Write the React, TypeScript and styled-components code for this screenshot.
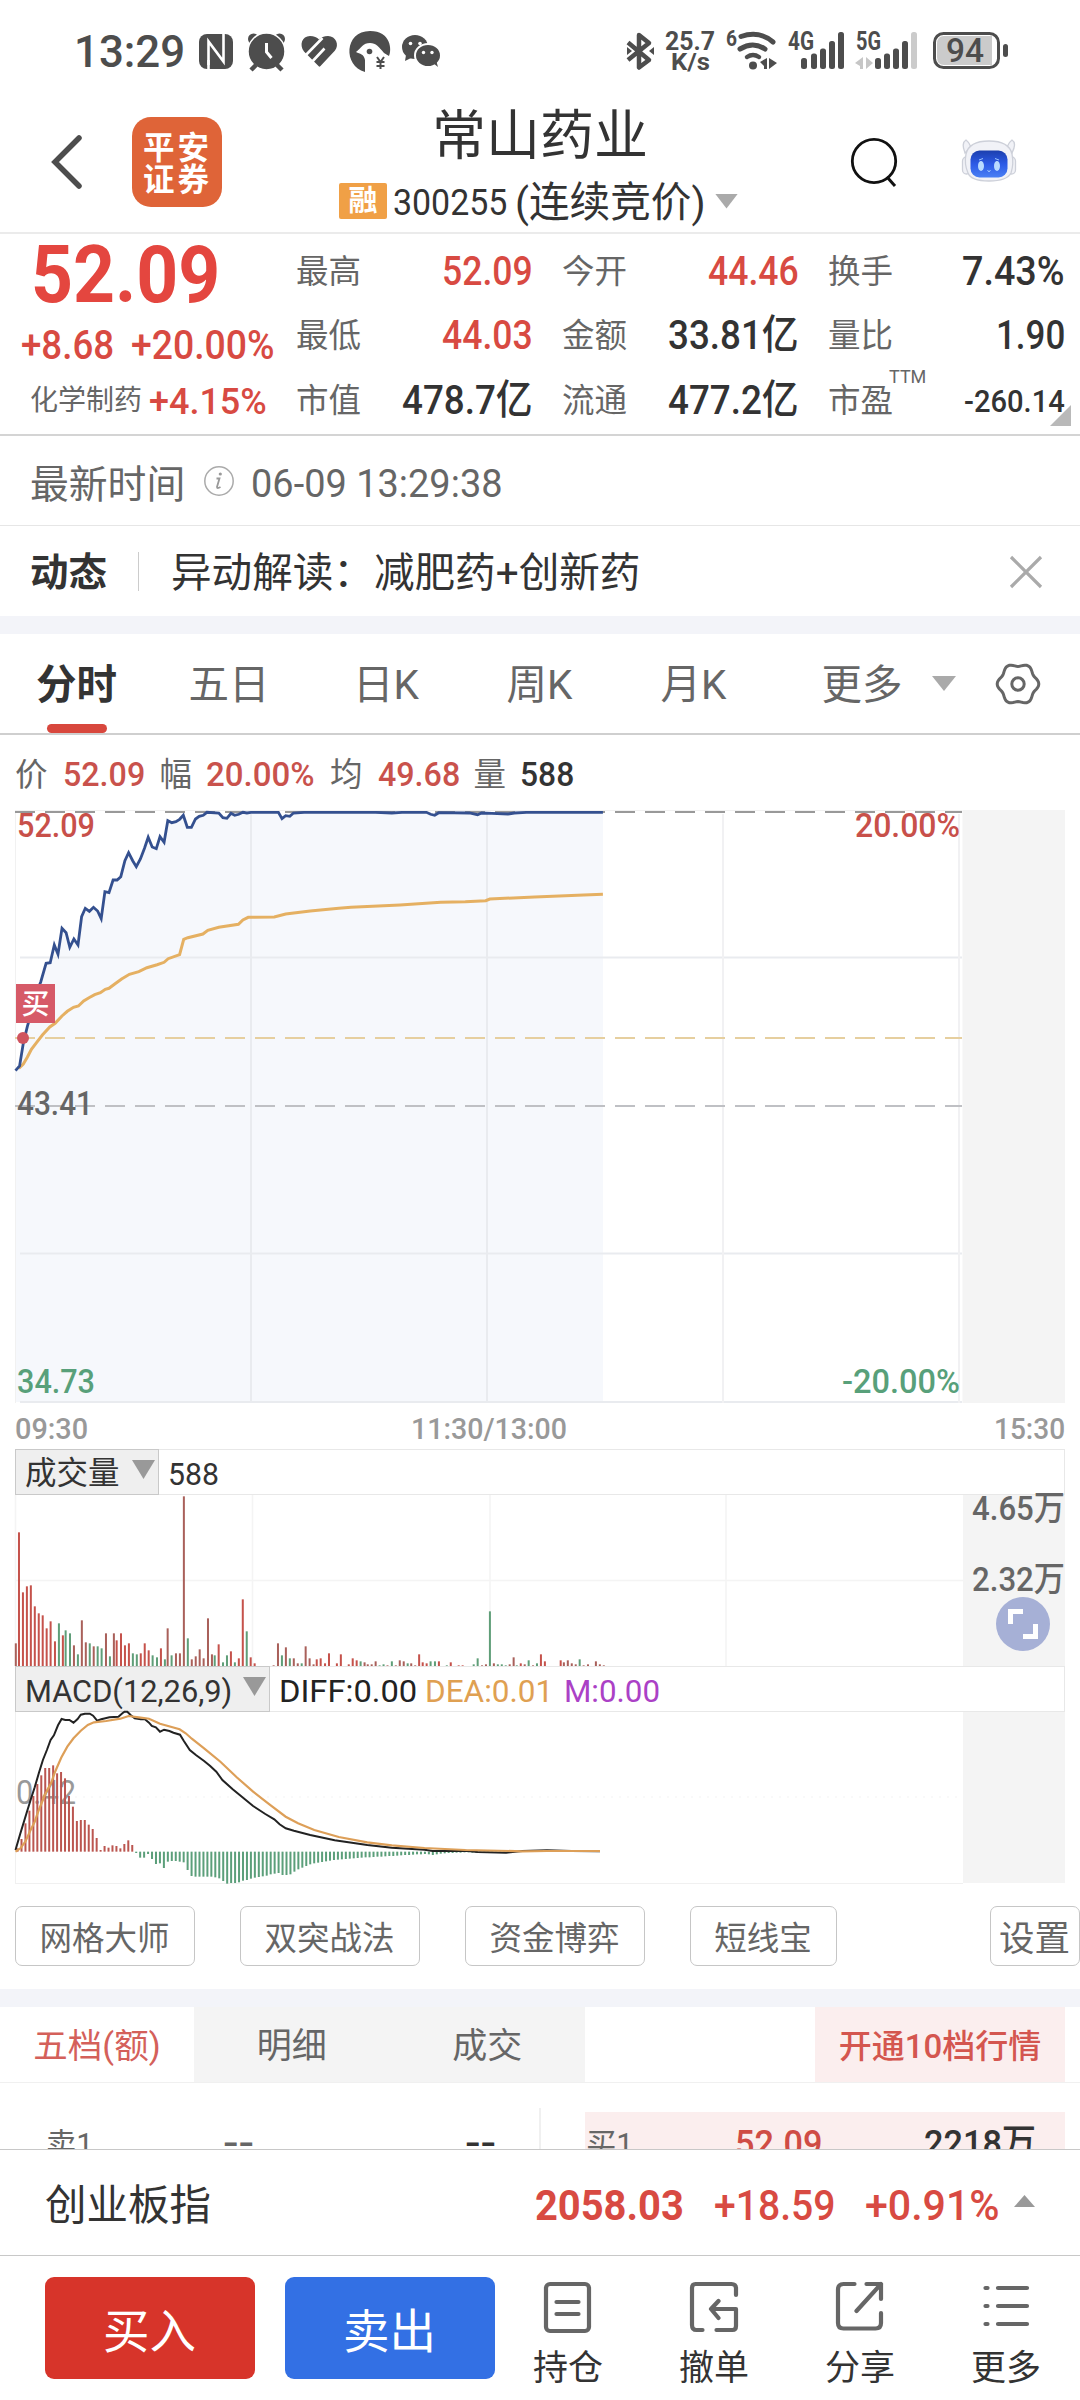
import React, { useLayoutEffect, useRef, useState } from "react";
import styled, { createGlobalStyle } from "styled-components";

const FONT = 'Roboto, "Noto Sans CJK SC", sans-serif';
const RED = "#d84a42";
const INK = "#333";
const GREY = "#666";
const GREEN = "#58a07a";

const GlobalStyle = createGlobalStyle`
  * { box-sizing: border-box; }
  html, body { margin: 0; padding: 0; background: #fff; }
  body { font-family: ${FONT}; color: ${INK}; }
  svg { display: block; flex: none; overflow: visible; }
`;

/* ---------- text helpers ---------- */

const FitBox = styled.span<{ $w: number; $size: number; $color?: string; $weight?: number; $ml?: number }>`
  display: block;
  flex: none;
  width: ${(p) => p.$w}px;
  margin-left: ${(p) => p.$ml ?? 0}px;
  font-size: ${(p) => p.$size}px;
  line-height: ${(p) => Math.round(p.$size * 1.2)}px;
  font-weight: ${(p) => p.$weight ?? 400};
  color: ${(p) => p.$color ?? INK};
  white-space: nowrap;
`;

const FitInner = styled.span`
  display: inline-block;
  vertical-align: top;
  transform-origin: 0 50%;
`;

interface NumProps {
  w: number;
  size: number;
  color?: string;
  weight?: number;
  ml?: number;
  children: React.ReactNode;
}

function Num({ w, size, color, weight, ml, children }: NumProps) {
  const ref = useRef<HTMLSpanElement>(null);
  const [k, setK] = useState(1);
  useLayoutEffect(() => {
    if (ref.current) setK(w / ref.current.offsetWidth);
  }, [w]);
  return (
    <FitBox $w={w} $size={size} $color={color} $weight={weight} $ml={ml}>
      <FitInner ref={ref} style={{ transform: `scaleX(${k})` }}>
        {children}
      </FitInner>
    </FitBox>
  );
}

const Label = styled.span<{ $size: number; $color?: string; $weight?: number; $ml?: number }>`
  flex: none;
  font-size: ${(p) => p.$size}px;
  line-height: ${(p) => Math.round(p.$size * 1.2)}px;
  color: ${(p) => p.$color ?? GREY};
  font-weight: ${(p) => p.$weight ?? 400};
  margin-left: ${(p) => p.$ml ?? 0}px;
  white-space: nowrap;
`;

const Triangle = styled.i<{ $w: number; $h: number; $color?: string; $up?: boolean; $ml?: number; $mt?: number }>`
  flex: none;
  width: ${(p) => p.$w}px;
  height: ${(p) => p.$h}px;
  margin-left: ${(p) => p.$ml ?? 0}px;
  margin-top: ${(p) => p.$mt ?? 0}px;
  background: ${(p) => p.$color ?? "#aaa"};
  clip-path: ${(p) => (p.$up ? "polygon(50% 0, 100% 100%, 0 100%)" : "polygon(0 0, 100% 0, 50% 100%)")};
`;

/* ---------- layout ---------- */

const Screen = styled.div`
  width: 1080px;
  height: 2400px;
  overflow: hidden;
  display: flex;
  flex-direction: column;
  background: #fff;
`;

const StatusBar = styled.div`
  height: 100px;
  flex: none;
  display: flex;
  align-items: center;
  padding: 3px 71px 0 73px;
  justify-content: space-between;
`;
const StatusGroup = styled.div`
  display: flex;
  align-items: center;
  height: 44px;
`;
const StatusIconsWrap = styled.div`
  margin-left: 7px;
`;

const Header = styled.header`
  height: 134px;
  flex: none;
  display: grid;
  grid-template-columns: 326px 1fr 326px;
  border-bottom: 2px solid #ebebeb;
`;
const HeaderLeft = styled.div`
  display: flex;
  align-items: flex-start;
  padding: 17px 0 0 50px;
`;
const BackWrap = styled.div`
  padding-top: 16px;
  width: 82px;
`;
const Logo = styled.div`
  width: 90px;
  height: 90px;
  border-radius: 19px;
  background: #df6438;
  color: #fff;
  font-family: "Noto Sans CJK SC", sans-serif;
  font-weight: 700;
  font-size: 31.5px;
  letter-spacing: 3px;
  line-height: 32px;
  padding: 12px 0 0 11px;
`;
const HeaderMid = styled.div`
  display: flex;
  flex-direction: column;
  align-items: center;
`;
const Title = styled.h1`
  margin: 6px 0 0;
  font-size: 54px;
  line-height: 62px;
  font-weight: 400;
  color: ${INK};
`;
const SubTitle = styled.div`
  display: flex;
  align-items: center;
  height: 40px;
  margin-top: 13px;
  width: 402px;
  & > span:not(:first-child) {
    padding-top: 4px;
  }
`;
const Margin = styled.span`
  width: 48px;
  height: 36px;
  background: #f0a046;
  border-radius: 2px;
  color: #fff;
  font-weight: 700;
  font-size: 29px;
  line-height: 36px;
  text-align: center;
`;
const HeaderRight = styled.div`
  display: flex;
  padding: 36px 0 0 96px;
  gap: 63px;
`;

const Quote = styled.section`
  height: 202px;
  flex: none;
  display: flex;
  position: relative;
  border-bottom: 2px solid #d4d4d4;
`;
const QuoteMain = styled.div`
  width: 297px;
  display: flex;
  flex-direction: column;
`;
const QuoteLine = styled.div<{ $h: number; $pl: number }>`
  display: flex;
  align-items: center;
  height: ${(p) => p.$h}px;
  padding-left: ${(p) => p.$pl}px;
`;
const Stats = styled.div`
  display: grid;
  grid-template-columns: 236px 236px 236px;
  grid-template-rows: 64px 65px 65px;
  column-gap: 30px;
  padding-top: 5px;
`;
const Stat = styled.div`
  display: flex;
  align-items: center;
  justify-content: space-between;
`;
const StatName = styled.span`
  position: relative;
  font-size: 32.5px;
  line-height: 40px;
  padding-top: 1px;
  margin-left: -1px;
  color: ${GREY};
`;
const Ttm = styled.sup`
  position: absolute;
  left: 61px;
  top: -13px;
  font-size: 18px;
  line-height: 20px;
  font-weight: 400;
`;
const Fold = styled.i`
  position: absolute;
  right: 9px;
  bottom: 8px;
  width: 21px;
  height: 21px;
  background: #b9b9b9;
  clip-path: polygon(100% 0, 100% 100%, 0 100%);
`;

const Row = styled.div<{ $h: number; $pl?: number; $line?: string; $pt?: number }>`
  height: ${(p) => p.$h}px;
  flex: none;
  display: flex;
  align-items: center;
  padding-left: ${(p) => p.$pl ?? 0}px;
  padding-top: ${(p) => p.$pt ?? 0}px;
  border-bottom: ${(p) => (p.$line ? `1px solid ${p.$line}` : "0")};
`;
const Divider = styled.i`
  width: 1px;
  height: 39px;
  background: #ccc;
  margin: -3px 0 0 31px;
`;
const Band = styled.div`
  height: 18px;
  flex: none;
  background: #f3f4f9;
`;
const CloseWrap = styled.span`
  margin: -3px 37px 0 auto;
`;
const InfoWrap = styled.span`
  margin-left: 18px;
  margin-top: -6px;
`;
const GearWrap = styled.span`
  margin-left: 39px;
`;

const Tabs = styled.nav`
  height: 101px;
  flex: none;
  display: flex;
  align-items: center;
  border-bottom: 2px solid #cfcfcf;
`;
const Tab = styled.span<{ $w: number; $active?: boolean }>`
  width: ${(p) => p.$w}px;
  height: 99px;
  display: flex;
  flex-direction: column;
  align-items: center;
  font-size: 40.5px;
  line-height: 102px;
  white-space: nowrap;
  color: ${(p) => (p.$active ? INK : GREY)};
  font-weight: ${(p) => (p.$active ? 700 : 400)};
`;
const Underline = styled.i`
  width: 60px;
  height: 9px;
  flex: none;
  margin-top: -12px;
  border-radius: 5px;
  background: #d8473d;
`;

const Panel = styled.div`
  width: 1050px;
  margin: 0 15px;
  flex: none;
`;
const Axis = styled.div`
  height: 46px;
  display: grid;
  grid-template-columns: 396px 1fr 71px;
  align-items: center;
  padding-top: 5px;
`;
const IndicatorBar = styled.div`
  height: 46px;
  border: 1px solid #e8e8e8;
  display: flex;
  align-items: center;
  & > span {
    padding-top: 3px;
  }
`;
const Picker = styled.div<{ $w: number }>`
  width: ${(p) => p.$w}px;
  height: 46px;
  margin: -1px 0 -1px -1px;
  background: #efefef;
  border: 1px solid #c9c9c9;
  display: flex;
  align-items: center;
  justify-content: space-between;
  padding: 0 3px 0 9px;
  & > span {
    padding-top: 3px;
  }
`;

const Tools = styled.div`
  height: 105px;
  flex: none;
  display: flex;
  align-items: flex-start;
  padding: 22px 0 0 15px;
`;
const Tool = styled.button<{ $w: number; $size?: number; $ml?: number }>`
  width: ${(p) => p.$w}px;
  height: 60px;
  flex: none;
  margin: 0 0 0 ${(p) => p.$ml ?? 0}px;
  padding: 0 1px 1px 0;
  border: 1px solid #c6c6c6;
  border-radius: 7px;
  background: #fff;
  font-family: ${FONT};
  font-size: ${(p) => p.$size ?? 32.5}px;
  color: ${GREY};
`;

const BookTabs = styled.div`
  height: 76px;
  flex: none;
  display: flex;
  border-bottom: 1px solid #f0f0f0;
`;
const BookTab = styled.span<{ $active?: boolean; $size: number }>`
  width: ${(p) => (p.$active ? 194 : 195.5)}px;
  height: 75px;
  line-height: ${(p) => (p.$active ? 78 : 80)}px;
  text-align: center;
  font-size: ${(p) => p.$size}px;
  color: ${(p) => (p.$active ? "#d4605a" : GREY)};
  background: ${(p) => (p.$active ? "#fff" : "#f4f4f4")};
`;
const Promo = styled.span`
  width: 250px;
  height: 75px;
  margin-left: 230px;
  line-height: 79px;
  text-align: center;
  font-size: 33px;
  font-weight: 500;
  color: #d4564f;
  background: #fbeeee;
`;
const Book = styled.div`
  height: 66px;
  flex: none;
  display: grid;
  grid-template-columns: 539px 46px 480px;
  overflow: hidden;
`;
const BookSide = styled.div<{ $pink?: boolean; $pl: number }>`
  display: flex;
  align-items: center;
  height: 60px;
  margin-top: 29px;
  padding: 4px 0 0 ${(p) => p.$pl}px;
  background: ${(p) => (p.$pink ? "#fbeeee" : "transparent")};
`;
const BookRule = styled.i`
  margin-top: 25px;
  height: 60px;
  border-left: 2px solid #f0f0f0;
`;

const IndexBar = styled.div`
  height: 107px;
  flex: none;
  display: flex;
  align-items: center;
  border-top: 1px solid #c8c8c8;
  border-bottom: 1px solid #c8c8c8;
  padding: 6px 45px 0 45px;
  background: #fff;
`;
const IndexNums = styled.div`
  margin-left: auto;
  display: flex;
  align-items: center;
`;

const BottomBar = styled.footer`
  flex: 1;
  display: flex;
  padding: 21px 0 0 45px;
`;
const Trade = styled.button<{ $bg: string }>`
  width: 210px;
  height: 102px;
  margin: 0 30px 0 0;
  border: 0;
  border-radius: 9px;
  padding: 0 1px 2px 0;
  background: ${(p) => p.$bg};
  color: #fff;
  font-family: ${FONT};
  font-size: 46.5px;
`;
const Action = styled.div`
  width: 146px;
  display: flex;
  flex-direction: column;
  align-items: center;
  gap: 16px;
  padding-top: 3px;
`;
const Actions = styled.div`
  display: flex;
  margin-left: -30px;
`;

/* ---------- chart data ---------- */

type Pt = [number, number];
/* Samples sit on a lattice of 2.45 x 3 units per pixel. */
const poly = (pts: Pt[], y0: number) =>
  pts.map(([x, y]) => `${(x / 2.45 - 15).toFixed(1)},${(y / 3 + y0).toFixed(1)}`).join(" ");

const price: Pt[] = [
  [38, 842], [48, 828], [57, 760], [67, 710], [82, 645], [92, 600], [100, 575], [113, 520], [123, 518], [133, 465], [142, 493], [152, 415], [162, 428], [171, 472],
  [181, 447], [191, 465], [200, 380], [209, 355], [219, 364], [229, 352], [239, 363], [248, 386], [257, 305], [267, 308], [277, 270],
  [287, 270], [296, 260], [306, 212], [315, 188], [325, 212], [334, 230], [344, 207], [354, 175], [363, 142], [373, 171], [383, 176],
  [392, 140], [402, 157], [411, 92], [421, 98], [431, 95], [440, 88], [449, 76], [459, 112], [469, 112], [479, 87], [488, 79],
  [498, 76], [507, 67], [536, 69], [546, 83], [556, 85], [566, 70], [575, 76], [585, 73], [595, 67], [605, 69], [615, 67], [682, 67],
  [691, 86], [700, 77], [710, 79], [719, 69], [745, 67], [920, 67], [960, 69], [985, 67], [1045, 67], [1055, 73], [1065, 76], [1075, 68], [1150, 69], [1170, 74],
  [1180, 69], [1205, 70], [1245, 72], [1260, 69], [1290, 67], [1477, 67],
];
const average: Pt[] = [
  [46, 835], [57, 822], [67, 802], [77, 778], [90, 757], [104, 735], [122, 711], [135, 700], [152, 678], [165, 664], [180, 652],
  [192, 648], [205, 633], [218, 623], [232, 614], [246, 608], [258, 598], [267, 595], [282, 581], [298, 567], [317, 553], [340, 545],
  [360, 533], [385, 524], [402, 517], [412, 506], [440, 494], [450, 448], [460, 443], [497, 432], [509, 421], [536, 412], [584, 403],
  [595, 390], [608, 382], [672, 381], [700, 372], [760, 363], [830, 355], [860, 352], [980, 345], [1080, 337], [1140, 335],
  [1190, 332], [1200, 327], [1310, 321], [1430, 315], [1477, 313],
];

/* x, top, tone: r red, d dark red, g green */
const volume = `40 849 d,48 516 r,58 696 r,68 678 r,78 675 r,88 738 r,98 759 r,108 765 r,118 804 r,128 783 r,139 843 r,149 789 g,159 825 r,166 810 g,177 819 g,187 855 d,197 882 g,207 780 d,217 846 d,227 849 g,237 858 d,247 858 g,257 864 g,268 819 d,278 888 g,288 819 d,295 840 r,306 819 r,316 855 r,326 849 r,336 879 g,346 882 g,356 879 r,366 849 r,376 870 r,386 885 g,397 891 g,407 864 r,417 897 g,424 804 d,434 885 g,445 879 d,455 879 d,465 408 d,475 834 g,485 897 d,495 888 d,505 867 d,515 894 d,526 774 d,536 882 d,543 885 g,553 852 r,564 906 g,574 885 g,584 873 r,594 906 g,604 894 r,614 717 r,624 813 g,634 891 r,644 909 r,692 915 d,703 849 d,713 885 g,723 861 d,733 894 g,743 894 d,753 909 d,763 909 g,773 858 d,783 894 d,793 912 d,801 897 r,811 894 r,822 909 r,832 879 r,852 909 r,862 882 r,882 912 r,892 894 r,902 900 r,912 903 g,922 906 d,930 912 d,940 912 d,950 903 d,960 915 g,970 912 g,980 915 d,991 903 g,1001 915 d,1011 900 d,1021 903 d,1031 909 g,1040 909 d,1050 915 d,1060 882 r,1069 906 r,1079 909 r,1089 903 g,1100 903 g,1110 903 r,1130 915 g,1140 906 r,1160 915 r,1170 915 r,1198 912 g,1208 894 g,1219 915 d,1229 912 d,1239 753 g,1249 909 d,1259 912 g,1269 912 g,1279 915 g,1289 912 d,1299 891 d,1307 915 g,1317 909 r,1327 912 d,1337 900 g,1348 915 d,1358 909 g,1368 882 r,1378 903 r,1418 900 r,1426 906 d,1436 900 d,1446 909 d,1456 912 d,1466 897 g,1476 915 d,1487 912 d,1507 903 d,1517 912 d,1527 915 d`
  .split(",")
  .map((s) => s.split(" "));
const tones: Record<string, string> = { r: "#c5524b", d: "#a9605a", g: "#5f9e78" };

const diff: Pt[] = [
  [38, 570], [50, 520], [65, 460], [75, 420], [85, 382], [95, 340], [105, 300], [115, 270], [124, 240], [132, 226], [142, 196],
  [151, 177], [160, 180], [170, 180], [180, 188], [190, 177], [198, 164], [208, 161], [220, 161], [228, 167], [238, 182], [248, 178],
  [268, 172], [290, 170], [300, 160], [305, 155], [312, 155], [320, 165], [330, 175], [345, 178], [355, 178], [365, 188], [372, 198],
  [382, 202], [392, 215], [402, 209], [415, 213], [425, 218], [441, 224], [450, 242], [465, 270], [480, 285], [500, 303], [515, 318],
  [530, 335], [545, 360], [570, 388], [600, 418], [620, 438], [650, 462], [672, 478], [685, 493], [700, 505], [720, 512], [760, 525],
  [820, 541], [900, 555], [960, 563], [1040, 569], [1060, 573], [1140, 572], [1170, 576], [1240, 578], [1280, 573], [1340, 571],
  [1400, 573], [1470, 574],
];
const dea: Pt[] = [
  [38, 575], [50, 565], [62, 545], [75, 510], [85, 485], [95, 450], [110, 405], [125, 370], [135, 335], [150, 293], [165, 260],
  [180, 235], [198, 212], [215, 195], [230, 187], [260, 183], [295, 176], [315, 168], [340, 172], [365, 176], [392, 191], [440, 208],
  [455, 220], [470, 236], [500, 265], [540, 305], [580, 352], [620, 395], [660, 433], [700, 470], [730, 490], [770, 510], [830, 531],
  [900, 547], [960, 556], [1040, 564], [1140, 570], [1280, 574], [1340, 573], [1470, 573],
];
const histogram = [
  565, 537, 490, 452, 408, 372, 346, 324, 324, 316, 340, 336, 355, 408, 440, 483, 480, 480, 494, 507, 534, 570, 558, 563, 556, 558,
  565, 552, 541, 555, 579, 593, 593, 582, 597, 612, 610, 624, 605, 603, 603, 605, 607, 630, 648, 650, 650, 650, 650, 650, 652, 655,
  663, 671, 669, 669, 667, 662, 660, 656, 653, 651, 649, 647, 643, 641, 639, 645, 645, 643, 635, 628, 623, 618, 613, 610, 608, 606,
  604, 602, 600, 599, 598, 597, 596, 595, 594, 593, 592, 592, 591, 590, 590, 589, 588, 588, 587, 586, 585, 585, 584, 583, 583, 582,
  583, 585, 583, 581, 580, 579, 579, 578, 578, 577, 577, 578, 579, 578, 578, 577, 577, 578, 578, 577, 577,
];

interface TagProps {
  x: number;
  y: number;
  w: number;
  size?: number;
  color: string;
  weight?: number;
  children: string;
}
const Tag = ({ x, y, w, size = 34, color, weight = 500, children }: TagProps) => (
  <text x={x} y={y} textLength={w} lengthAdjust="spacingAndGlyphs" fontFamily={FONT} fontSize={size} fontWeight={weight} fill={color}>
    {children}
  </text>
);

function PriceChart() {
  return (
    <svg width="1050" height="593" viewBox="0 0 1050 593">
      <rect x="947.5" y="0" width="102.5" height="593" fill="#f4f4f4" />
      <polygon points={`${poly(price, -20)} 588,592 0,592`} fill="#f6f8fc" />
      <g stroke="#e9ebef" strokeWidth="2">
        <path d="M236 4V593M472 4V593M5 147.500H947M5 443.500H947M5 592H947" />
        <path d="M708 4V593M944 4V593" stroke="#f1f1f3" />
        <path d="M.5 0V593M0 .5H947" stroke="#f1f1f1" strokeWidth="1" />
      </g>
      <path d="M0 2H947" stroke="#999" strokeWidth="2" strokeDasharray="20 10" />
      <path d="M0 228H947" stroke="#e6cf9f" strokeWidth="2" strokeDasharray="20 10" />
      <path d="M0 296H947" stroke="#bfc0c4" strokeWidth="2" strokeDasharray="20 10" />
      <Tag x={2} y={27} w={78} color="#c8504a">52.09</Tag>
      <Tag x={2} y={305} w={76} color={GREY}>43.41</Tag>
      <Tag x={2} y={583} w={78} color={GREEN}>34.73</Tag>
      <Tag x={840} y={27} w={105} color="#c8504a">20.00%</Tag>
      <Tag x={827} y={583} w={118} color={GREEN}>-20.00%</Tag>
      <polyline points={poly(average, -20)} fill="none" stroke="#e5b062" strokeWidth="3" />
      <polyline points={poly(price, -20)} fill="none" stroke="#34508f" strokeWidth="2.800" />
      <circle cx="8" cy="228" r="6" fill="#d0545f" />
      <rect x="1" y="174" width="39" height="39" fill="#d65a68" />
      <text x="20.500" y="204" textAnchor="middle" fontFamily={FONT} fontSize="28" fontWeight="500" fill="#fff">买</text>
    </svg>
  );
}

function VolumeChart() {
  return (
    <svg width="1050" height="171" viewBox="0 0 1050 171">
      <rect x="948" width="102" height="171" fill="#f4f4f4" />
      <path d="M237.500 0V171M475 0V171M711 0V171M.5 0V171M0 85.500H1050" stroke="#f4f4f4" strokeWidth="1.500" fill="none" />
      {volume.map(([x, top, tone]) => (
        <rect key={x} x={Number(x) / 2.529 - 16} y={(Number(top) - 917) / 3 + 171} width="2" height={(917 - Number(top)) / 3} fill={tones[tone]} />
      ))}
      <Tag x={957} y={25} w={93} color={GREY}>4.65万</Tag>
      <Tag x={957} y={96} w={93} color={GREY}>2.32万</Tag>
      <circle cx="1008" cy="129" r="27" fill="#a6b0d6" />
      <path d="M995.500 129V116.500H1008M1020.500 129V141.500H1008" fill="none" stroke="#fff" strokeWidth="5" />
    </svg>
  );
}

function MacdChart() {
  return (
    <svg width="1050" height="172" viewBox="0 0 1050 172">
      <rect x="948" width="102" height="171" fill="#f4f4f4" />
      <path d="M.5 0V171M0 171.500H948" stroke="#f0f0f0" fill="none" />
      <path d="M60 85H948" stroke="#f3f3f3" strokeDasharray="2 6" fill="none" />
      <Tag x={1} y={91.500} w={60} size={33} color="#999" weight={400}>0.42</Tag>
      {histogram.map((v, i) => (
        <rect
          key={i}
          x={(43 + i * 9.69) / 2.45 - 16}
          y={Math.min(v, 575) / 3 - 52}
          width="2"
          height={Math.abs(v - 575) / 3}
          fill={v < 575 ? "#bb5650" : "#5b9f7a"}
        />
      ))}
      <polyline points={poly(diff, -52)} fill="none" stroke="#222" strokeWidth="2" />
      <polyline points={poly(dea, -52)} fill="none" stroke="#dd9f58" strokeWidth="2.200" />
    </svg>
  );
}

/* ---------- icons ---------- */

const DARK = "#4d4d4d";

const StatusIcons = () => (
  <svg width="250" height="44" viewBox="192 30 250 44">
    <g fill={DARK}>
      <rect x="199" y="34" width="34" height="35" rx="8" />
      <path d="M208.500 65V41.500L223.500 61.500V34" fill="none" stroke="#fff" strokeWidth="2.600" />
      <path d="M208.500 69V60" fill="none" stroke="#fff" strokeWidth="2.600" />
      <circle cx="253.500" cy="39" r="5.500" />
      <circle cx="279.500" cy="39" r="5.500" />
      <circle cx="266.500" cy="51.500" r="18.500" stroke="#fff" strokeWidth="1.500" />
      <path d="M256 65L251 70M277 65L282 70" stroke={DARK} strokeWidth="4.500" />
      <path d="M266.500 43V52L271.500 58" fill="none" stroke="#fff" strokeWidth="3" />
      <path d="M319 66.500L304 51.500C299 45 302 36 310 36C314 36 317 37.500 319 39.500C321 37.500 324 36 328 36C336 36 339.500 45 335 50.500L320.500 66Q319.500 67 319 66.500Z" />
      <path d="M303 58L322.500 38M310 64L324.500 48.500" fill="none" stroke="#fff" strokeWidth="2.600" />
      <path d="M365 72C343 66 344 31 370 31C391 31 392 50 389 56L384 53C379 47 376 43 370 43C363 43 361 48 356 52C360 54 364 54 365 60Z" />
      <circle cx="369.500" cy="51.500" r="2.800" />
      <path d="M377 57L380.500 62L384 57M380.500 62V69M376.500 62H384.500M376.500 66H384.500" fill="none" stroke={DARK} strokeWidth="2" />
      <ellipse cx="415" cy="47" rx="13" ry="12" />
      <path d="M406 55L405 61L413 57Z" />
      <ellipse cx="428" cy="55.500" rx="13" ry="11.500" stroke="#fff" strokeWidth="2" />
      <path d="M433 63L438 67L436 60Z" />
      <g fill="#fff">
        <circle cx="410.500" cy="43.500" r="1.800" />
        <circle cx="420" cy="43.500" r="1.800" />
        <circle cx="423.500" cy="52.500" r="1.700" />
        <circle cx="432" cy="52.500" r="1.700" />
      </g>
    </g>
  </svg>
);

const StatusRight = () => (
  <svg width="386" height="44" viewBox="624 30 386 44">
    <path d="M629 42.500L650 60L640 67.500V35L650 43L629 60" fill="none" stroke={DARK} strokeWidth="4.500" strokeLinejoin="round" />
    <path d="M628 47L633 51L628 55ZM655 47L650 51L655 55Z" fill={DARK} />
    <Tag x={666} y={50} w={50} size={25} color={DARK} weight={700}>25.7</Tag>
    <Tag x={672} y={69.500} w={39} size={24} color={DARK} weight={700}>K/s</Tag>
    <Tag x={727} y={46} w={11} size={22} color={DARK} weight={700}>6</Tag>
    <g fill="none" stroke={DARK} strokeWidth="5" strokeLinecap="round">
      <path d="M742 36.500Q760 30 774 42M741 49Q754 41 766 49" />
      <path d="M748 57Q754 53 760 57" strokeWidth="4.500" />
    </g>
    <circle cx="754" cy="65.500" r="4" fill={DARK} />
    <path d="M768 58V69H765V66L761 62ZM770 58V69L778 63Z" fill={DARK} />
    <Tag x={789} y={50} w={26} size={25} color={DARK} weight={700}>4G</Tag>
    <g fill={DARK}>
      <rect x="802" y="58" width="6" height="11" rx="2.500" />
      <rect x="812" y="53.500" width="6" height="15.500" rx="2.500" />
      <rect x="821" y="48.500" width="6" height="20.500" rx="2.500" />
      <rect x="830" y="41" width="6" height="28" rx="2.500" />
      <rect x="839" y="32" width="6" height="37" rx="2.500" />
      <rect x="876" y="58" width="6" height="11" rx="2.500" />
      <rect x="885" y="53.500" width="6" height="15.500" rx="2.500" />
      <rect x="894" y="48.500" width="6" height="20.500" rx="2.500" />
      <rect x="903" y="41" width="6" height="28" rx="2.500" />
    </g>
    <rect x="912" y="32" width="6" height="37" rx="2.500" fill="#cbcbcb" />
    <Tag x={857} y={50} w={25} size={25} color={DARK} weight={700}>5G</Tag>
    <path d="M864 57V69H861V66L856 63ZM867 57V69L874 63Z" fill="#c6c6c6" />
    <rect x="935.500" y="33.500" width="64" height="34" rx="9" fill="#fff" stroke={DARK} strokeWidth="3" />
    <path d="M945 36H993V65H945Q938 65 938 57V44Q938 36 945 36Z" fill="#cbcbcb" />
    <rect x="1004" y="44" width="5" height="13" rx="2.500" fill={DARK} />
    <Tag x={947} y={62} w={38} size={34} color={DARK} weight={500}>94</Tag>
  </svg>
);

const Back = () => (
  <svg width="34" height="58" viewBox="50 133 34 58">
    <path d="M79 138L55 162L79 186" fill="none" stroke={DARK} strokeWidth="5.500" strokeLinecap="round" />
  </svg>
);
const Search = () => (
  <svg width="48" height="52" viewBox="850 137 48 52">
    <circle cx="874" cy="162" r="21.700" fill="none" stroke="#111" strokeWidth="2.800" />
    <path d="M887 178L895 187" stroke="#111" strokeWidth="3" />
  </svg>
);
const Robot = () => (
  <svg width="56" height="52" viewBox="962 137 56 52">
    <defs>
      <linearGradient id="visor" x1="0" y1="0" x2="0" y2="1">
        <stop offset="0" stopColor="#1c3fae" />
        <stop offset=".5" stopColor="#2c5ae6" />
        <stop offset="1" stopColor="#4a80f4" />
      </linearGradient>
    </defs>
    <g fill="#f1f2f7" stroke="#cdd0d9" strokeWidth="1.300">
      <path d="M966 154Q962 144 967 141Q970 143 972 148ZM1013 154Q1018 144 1013 141Q1010 143 1008 148Z" />
      <rect x="963.500" y="158" width="8" height="17" rx="4" />
      <rect x="1008.500" y="158" width="8" height="17" rx="4" />
      <path d="M967 155Q970 142 990 142Q1010 142 1013 155Q1015 165 1012 174Q1008 182 990 182Q972 182 969 174Q965 165 967 155Z" />
    </g>
    <rect x="971.500" y="151.500" width="37" height="27" rx="9" fill="url(#visor)" />
    <ellipse cx="982" cy="167" rx="3" ry="5" fill="#b9dbff" />
    <ellipse cx="998" cy="167" rx="3" ry="5" fill="#b9dbff" />
    <path d="M980 161L984 159.500M996 159.500L1000 161M988.500 171L990 173L991.500 171" stroke="#9cc5ff" fill="none" />
  </svg>
);
const Info = () => (
  <svg width="32" height="32" viewBox="0 0 32 32">
    <circle cx="16" cy="16" r="14.200" fill="none" stroke="#aaa" strokeWidth="1.500" />
    <path d="M13.500 13.500H16.500L14 22Q14 24 17.500 22" fill="none" stroke="#999" strokeWidth="1.800" />
    <circle cx="17.300" cy="9" r="1.600" fill="#999" />
  </svg>
);
const Close = () => (
  <svg width="34" height="34" viewBox="0 0 34 34">
    <path d="M2 2L32 32M32 2L2 32" stroke="#aaa" strokeWidth="3.200" />
  </svg>
);

/* Six soft lobes, one every 60 degrees. */
const gearOutline = Array.from({ length: 72 }, (_, i) => {
  const a = (i * 5 * Math.PI) / 180;
  const r = 19.2 + 1.6 * Math.cos(6 * a);
  return `${(23 + r * Math.cos(a)).toFixed(2)},${(23 + r * Math.sin(a)).toFixed(2)}`;
}).join(" ");
const Gear = () => (
  <svg width="46" height="46" viewBox="0 0 46 46" fill="none" stroke={GREY} strokeWidth="3">
    <polygon points={gearOutline} />
    <circle cx="23" cy="23" r="6.200" />
  </svg>
);

const IconFrame = ({ children }: { children: React.ReactNode }) => (
  <svg width="52" height="52" viewBox="0 0 52 52" fill="none" stroke={GREY} strokeWidth="4.200" strokeLinecap="round" strokeLinejoin="round">
    {children}
  </svg>
);
const actions = [
  {
    name: "持仓",
    icon: (
      <>
        <rect x="4" y="4" width="43" height="47" rx="4" />
        <path d="M14.500 22H36.500M14.500 34H36.500" />
      </>
    ),
  },
  {
    name: "撤单",
    icon: (
      <>
        <path d="M48 15V8Q48 4 43.500 4H7.500Q4 4 4 8V45Q4 50 8.500 50H14.500M28.500 50H44.500Q48 50 48 46V29H23.500M30.500 21L23 29L30.500 38" />
      </>
    ),
  },
  {
    name: "分享",
    icon: (
      <>
        <path d="M20.500 4H9.500Q4 4 4 9.500V43Q4 48.500 9.500 48.500H41.500Q47 48.500 47 43V33M32.500 4H47V19M47 4L22.500 31" />
      </>
    ),
  },
  {
    name: "更多",
    icon: (
      <>
        <path d="M5.500 8H7.500M5.500 26H7.500M5.500 44H7.500M18 8H47M18 26H47M18 44H47" />
      </>
    ),
  },
];

/* ---------- page ---------- */

export default function App() {
  return (
    <Screen>
      <GlobalStyle />
      <StatusBar>
        <StatusGroup>
          <Num w={111} size={45} color={DARK} weight={500} ml={1}>13:29</Num>
          <StatusIconsWrap><StatusIcons /></StatusIconsWrap>
        </StatusGroup>
        <StatusGroup><StatusRight /></StatusGroup>
      </StatusBar>

      <Header>
        <HeaderLeft>
          <BackWrap><Back /></BackWrap>
          <Logo>平安<br />证券</Logo>
        </HeaderLeft>
        <HeaderMid>
          <Title>常山药业</Title>
          <SubTitle>
            <Margin>融</Margin>
            <Num w={114} size={36} ml={6}>300255</Num>
            <Num w={191} size={41.5} ml={8}>(连续竞价)</Num>
            <Triangle $w={23} $h={15} $ml={9} />
          </SubTitle>
        </HeaderMid>
        <HeaderRight>
          <Search />
          <Robot />
        </HeaderRight>
      </Header>

      <Quote>
        <QuoteMain>
          <QuoteLine $h={82} $pl={31}>
            <Num w={189} size={79} weight={700} color="#e4463f">52.09</Num>
          </QuoteLine>
          <QuoteLine $h={58} $pl={21}>
            <Num w={93} size={41} weight={500} color={RED}>+8.68</Num>
            <Num w={144} size={41} weight={500} color={RED} ml={17}>+20.00%</Num>
          </QuoteLine>
          <QuoteLine $h={54} $pl={30}>
            <Label $size={28}>化学制药</Label>
            <Num w={118} size={37.500} weight={500} color={RED} ml={7}>+4.15%</Num>
          </QuoteLine>
        </QuoteMain>
        <Stats>
          <Stat><StatName>最高</StatName><Num w={91} size={41} weight={500} color={RED}>52.09</Num></Stat>
          <Stat><StatName>今开</StatName><Num w={91} size={41} weight={500} color={RED}>44.46</Num></Stat>
          <Stat><StatName>换手</StatName><Num w={103} size={41} weight={500}>7.43%</Num></Stat>
          <Stat><StatName>最低</StatName><Num w={91} size={41} weight={500} color={RED}>44.03</Num></Stat>
          <Stat><StatName>金额</StatName><Num w={131} size={41} weight={500}>33.81亿</Num></Stat>
          <Stat><StatName>量比</StatName><Num w={69} size={41} weight={500}>1.90</Num></Stat>
          <Stat><StatName>市值</StatName><Num w={131} size={41} weight={500}>478.7亿</Num></Stat>
          <Stat><StatName>流通</StatName><Num w={131} size={41} weight={500}>477.2亿</Num></Stat>
          <Stat><StatName>市盈<Ttm>TTM</Ttm></StatName><Num w={101} size={32} weight={500}>-260.14</Num></Stat>
        </Stats>
        <Fold />
      </Quote>

      <Row $h={90} $pl={30} $line="#e6e6e6" $pt={7}>
        <Label $size={38.8}>最新时间</Label>
        <InfoWrap><Info /></InfoWrap>
        <Num w={252} size={39} color={GREY} ml={16}>06-09 13:29:38</Num>
      </Row>
      <Row $h={90} $pl={30} $pt={4}>
        <Label $size={38.5} $weight={700} $color={INK}>动态</Label>
        <Divider />
        <Label $size={40.6} $color={INK} $ml={32}>异动解读：减肥药+创新药</Label>
        <CloseWrap><Close /></CloseWrap>
      </Row>
      <Band />

      <Tabs>
        <Tab $w={153} $active>分时<Underline /></Tab>
        <Tab $w={152}>五日</Tab>
        <Tab $w={162}>日K</Tab>
        <Tab $w={145}>周K</Tab>
        <Tab $w={163}>月K</Tab>
        <Tab $w={174}>更多</Tab>
        <Triangle $w={24} $h={15} $ml={-17} />
        <GearWrap><Gear /></GearWrap>
      </Tabs>

      <Row $h={75} $pl={15} $pt={5}>
        <Label $size={32.5}>价</Label>
        <Num w={82} size={33} weight={500} color="#c9524c" ml={15}>52.09</Num>
        <Label $size={32.5} $ml={15}>幅</Label>
        <Num w={109} size={33} weight={500} color="#c9524c" ml={14}>20.00%</Num>
        <Label $size={32.5} $ml={15}>均</Label>
        <Num w={82} size={33} weight={500} color="#c9524c" ml={15}>49.68</Num>
        <Label $size={32.5} $ml={14}>量</Label>
        <Num w={54} size={33} weight={500} ml={14}>588</Num>
      </Row>

      <Panel>
        <PriceChart />
        <Axis>
          <Num w={73} size={30} color="#999" weight={500}>09:30</Num>
          <Num w={156} size={30} color="#999" weight={500}>11:30/13:00</Num>
          <Num w={71} size={30} color="#999" weight={500}>15:30</Num>
        </Axis>
        <IndicatorBar>
          <Picker $w={144}>
            <Label $size={31.5} $color={INK}>成交量</Label>
            <Triangle $w={23} $h={19} $mt={-5} $color="#999" />
          </Picker>
          <Num w={51} size={32} ml={9}>588</Num>
        </IndicatorBar>
        <VolumeChart />
        <IndicatorBar>
          <Picker $w={255}>
            <Num w={207} size={32}>MACD(12,26,9)</Num>
            <Triangle $w={23} $h={19} $mt={-5} $color="#999" />
          </Picker>
          <Num w={138} size={32} color="#222" ml={9}>DIFF:0.00</Num>
          <Num w={128} size={32} color="#dfa052" ml={8}>DEA:0.01</Num>
          <Num w={96} size={32} color="#ab41c6" ml={11}>M:0.00</Num>
        </IndicatorBar>
        <MacdChart />
      </Panel>

      <Tools>
        <Tool $w={180}>网格大师</Tool>
        <Tool $w={180} $ml={45}>双突战法</Tool>
        <Tool $w={180} $ml={45}>资金博弈</Tool>
        <Tool $w={147} $ml={45}>短线宝</Tool>
        <Tool $w={90} $ml={153} $size={35.5}>设置</Tool>
      </Tools>
      <Band />

      <BookTabs>
        <BookTab $active $size={34.5}>五档(额)</BookTab>
        <BookTab $size={35}>明细</BookTab>
        <BookTab $size={35}>成交</BookTab>
        <Promo>开通10档行情</Promo>
      </BookTabs>
      <Book>
        <BookSide $pl={46}>
          <Num w={47} size={31} color={GREY}>卖1</Num>
          <Num w={31} size={37} color={GREY} weight={500} ml={130}>--</Num>
          <Num w={31} size={37} weight={500} ml={211}>--</Num>
        </BookSide>
        <BookRule />
        <BookSide $pink $pl={1}>
          <Num w={47} size={31} color={GREY}>买1</Num>
          <Num w={87} size={37} color="#cf4c45" weight={500} ml={102}>52.09</Num>
          <Num w={112} size={37} weight={500} ml={102}>2218万</Num>
        </BookSide>
      </Book>

      <IndexBar>
        <Label $size={41.5} $color={INK}>创业板指</Label>
        <IndexNums>
          <Num w={149} size={42} weight={700} color={RED}>2058.03</Num>
          <Num w={121} size={42} weight={500} color={RED} ml={30}>+18.59</Num>
          <Num w={135} size={42} weight={500} color={RED} ml={30}>+0.91%</Num>
          <Triangle $up $w={21} $h={12} $color="#999" $ml={14} $mt={-9} />
        </IndexNums>
      </IndexBar>

      <BottomBar>
        <Trade $bg="#d7342a">买入</Trade>
        <Trade $bg="#3370e4">卖出</Trade>
        <Actions>
          {actions.map((a) => (
            <Action key={a.name}>
              <IconFrame>{a.icon}</IconFrame>
              <Label $size={35} $color={INK}>{a.name}</Label>
            </Action>
          ))}
        </Actions>
      </BottomBar>
    </Screen>
  );
}
